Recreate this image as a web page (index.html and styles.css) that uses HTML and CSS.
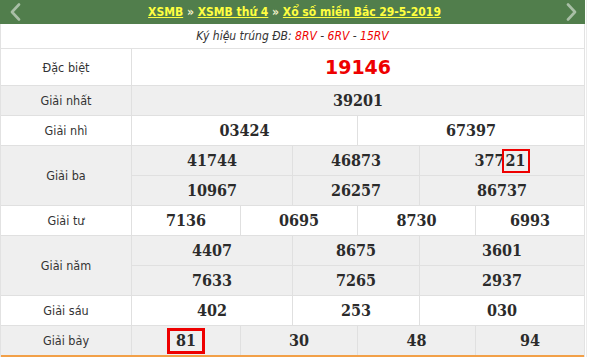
FILE: index.html
```
<!DOCTYPE html>
<html lang="vi">
<head>
<meta charset="utf-8">
<title>XSMB 29-5-2019</title>
<link rel="stylesheet" href="styles.css">
</head>
<body>
<div class="frame">
  <div class="board">
    <div class="head">
      <svg class="chev" width="12" height="18" viewBox="0 0 12 18"><path d="M10 1.5 L3 9 L10 16.5" fill="none" stroke="#a9bfa6" stroke-width="2.6" stroke-linecap="round" stroke-linejoin="round"/></svg>
      <div class="crumbs"><a href="#">XSMB</a> <span class="sep">»</span> <a href="#">XSMB thứ 4</a> <span class="sep">»</span> <a href="#">Xổ số miền Bắc 29-5-2019</a></div>
      <svg class="chev" width="12" height="18" viewBox="0 0 12 18"><path d="M2 1.5 L9 9 L2 16.5" fill="none" stroke="#a9bfa6" stroke-width="2.6" stroke-linecap="round" stroke-linejoin="round"/></svg>
    </div>
    <div class="sub"><span>Ký hiệu trúng ĐB: <span class="code">8RV</span> - <span class="code">6RV</span> - <span class="code">15RV</span></span></div>

    <div class="prize white db-row">
      <div class="lbl">Đặc biệt</div>
      <div class="vals c1"><div class="cell"><span class="db">19146</span></div></div>
    </div>
    <div class="prize gray">
      <div class="lbl">Giải nhất</div>
      <div class="vals c1"><div class="cell">39201</div></div>
    </div>
    <div class="prize white">
      <div class="lbl">Giải nhì</div>
      <div class="vals c2"><div class="cell">03424</div><div class="cell">67397</div></div>
    </div>
    <div class="prize gray">
      <div class="lbl">Giải ba</div>
      <div class="vals c3">
        <div class="cell">41744</div><div class="cell">46873</div><div class="cell"><span>377<span class="hit tight">21</span></span></div>
        <div class="cell">10967</div><div class="cell">26257</div><div class="cell">86737</div>
      </div>
    </div>
    <div class="prize white">
      <div class="lbl">Giải tư</div>
      <div class="vals c4"><div class="cell">7136</div><div class="cell">0695</div><div class="cell">8730</div><div class="cell">6993</div></div>
    </div>
    <div class="prize gray">
      <div class="lbl">Giải năm</div>
      <div class="vals c3">
        <div class="cell">4407</div><div class="cell">8675</div><div class="cell">3601</div>
        <div class="cell">7633</div><div class="cell">7265</div><div class="cell">2937</div>
      </div>
    </div>
    <div class="prize white">
      <div class="lbl">Giải sáu</div>
      <div class="vals c3"><div class="cell">402</div><div class="cell">253</div><div class="cell">030</div></div>
    </div>
    <div class="prize gray last">
      <div class="lbl">Giải bảy</div>
      <div class="vals c4"><div class="cell"><span class="hit big">81</span></div><div class="cell">30</div><div class="cell">48</div><div class="cell">94</div></div>
    </div>
  </div>
</div>
</body>
</html>
```
FILE: styles.css
```
html, body {
  margin: 0;
  padding: 0;
  background: #ffffff;
}
.frame {
  width: 587px;
  border-right: 1px solid #ececec;
  box-sizing: border-box;
}
.board {
  width: 585px;
  box-sizing: border-box;
  border-left: 1px solid #e2e2e2;
  border-right: 1px solid #e2e2e2;
  font-family: "DejaVu Sans", sans-serif;
  font-stretch: condensed;
}
.head {
  margin: 0 -1px;
  height: 24px;
  background: #517e4c;
  display: flex;
  align-items: center;
  justify-content: space-between;
  padding: 0 7px 0 9px;
}
.crumbs {
  font-size: 12px;
  font-weight: bold;
  color: #f2f2c8;
  padding-left: 2px;
}
.crumbs a {
  color: #ffff40;
  text-decoration: underline;
}
.sep {
  color: #f0f0c8;
}
.sub {
  height: 24px;
  border-bottom: 1px solid #e2e2e2;
  display: flex;
  align-items: center;
  justify-content: center;
  font-size: 12px;
  font-style: italic;
  color: #333333;
}
.code {
  color: #ee0000;
}
.prize {
  display: grid;
  grid-template-columns: 131px 1fr;
  border-bottom: 1px solid #e0e0e0;
}
.prize.white {
  background: #ffffff;
}
.prize.gray {
  background: #efefef;
}
.prize.last {
  border-bottom: 2px solid #f2a048;
}
.lbl {
  border-right: 1px solid #e0e0e0;
  display: flex;
  align-items: center;
  justify-content: center;
  font-size: 12.5px;
  color: #333333;
}
.vals {
  display: grid;
  gap: 1px;
  background: #e0e0e0;
}
.vals.c1 { grid-template-columns: 1fr; }
.vals.c2 { grid-template-columns: 225px 1fr; }
.vals.c3 { grid-template-columns: 160px 126px 1fr; }
.vals.c4 { grid-template-columns: 108px 116px 117px 1fr; }
.cell {
  height: 29px;
  display: flex;
  align-items: center;
  justify-content: center;
  font-family: "DejaVu Serif", serif;
  font-stretch: condensed;
  font-weight: bold;
  font-size: 16px;
  color: #2b2b2b;
}
.prize.white .cell { background: #ffffff; }
.prize.gray .cell { background: #efefef; }
.db-row .cell {
  height: 36px;
}
.db {
  font-family: "DejaVu Sans", sans-serif;
  font-stretch: normal;
  font-size: 19px;
  font-weight: bold;
  color: #ee0000;
}
.hit {
  display: inline-block;
  border: 2px solid #ee0000;
  padding: 0 2px 0 1px;
  line-height: 20px;
}
.hit.tight {
  margin-left: -3px;
  padding-left: 2px;
}
.hit.big {
  border-width: 3px;
  padding: 0 6px;
}
```
